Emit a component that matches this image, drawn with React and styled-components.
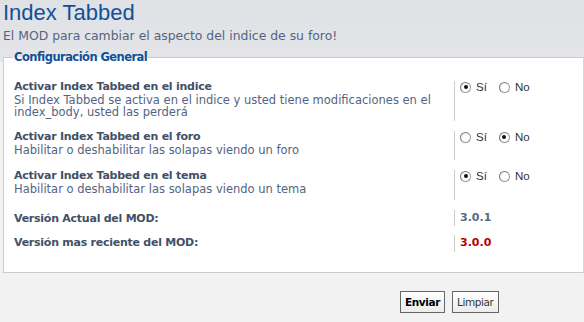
import styled, { createGlobalStyle } from "styled-components";

const GlobalStyle = createGlobalStyle`
  html, body {
    margin: 0;
    padding: 0;
  }
  body {
    background: #f2f2f2;
    font-family: "DejaVu Sans", Verdana, sans-serif;
  }
`;

const Page = styled.div`
  width: 584px;
  height: 322px;
  overflow: hidden;
  background: linear-gradient(to bottom, #dfe1e5 0, #e3e5e9 62px, #f2f2f2 62px);
`;

const Header = styled.div`
  padding: 0 3px;
`;

const Title = styled.h1`
  margin: 0;
  padding-top: 1px;
  font-family: "Liberation Sans", Arial, sans-serif;
  font-weight: normal;
  font-size: 22px;
  line-height: 24px;
  color: #115098;
`;

const Subtitle = styled.p`
  margin: 3px 0 0;
  font-size: 12.4px;
  line-height: 15px;
  color: #536482;
`;

const Fieldset = styled.fieldset`
  margin: 7px 0 0 3px;
  padding: 17px 0 8px 10px;
  width: 581px;
  box-sizing: border-box;
  border: 1px solid #cccccc;
  border-right-color: #d8d8d8;
  background: #ffffff;
  min-inline-size: 0;
`;

const Legend = styled.legend`
  padding: 0 1px;
  margin-left: -1px;
  font-weight: bold;
  font-size: 11.5px;
  line-height: 14px;
  color: #115098;
  font-family: "DejaVu Sans", Tahoma, sans-serif;
  letter-spacing: -0.55px;
`;

const Row = styled.div`
  display: grid;
  grid-template-columns: 440px 1fr;
  margin-bottom: ${p => p.$gap}px;
`;

const Label = styled.div`
  padding-top: ${p => p.$offset || 0}px;
  font-size: 11.5px;
  line-height: 12.5px;
  color: #536482;
`;

const LabelTitle = styled.div`
  font-weight: bold;
  font-size: 11px;
  color: #425067;
  letter-spacing: -0.25px;
`;

const Control = styled.div`
  border-left: 1px solid #cccccc;
  padding-left: 5px;
  display: flex;
  align-items: flex-start;
  gap: 12px;
  min-height: ${p => p.$h}px;
  box-sizing: border-box;
`;

const Option = styled.label`
  display: flex;
  align-items: center;
  gap: 5px;
  font-family: "Liberation Sans", Arial, sans-serif;
  font-size: 11.5px;
  line-height: 12px;
  color: #333333;
`;

const Radio = styled.span`
  width: 11px;
  height: 11px;
  border-radius: 50%;
  box-sizing: border-box;
  border: 1px solid #9a9a9a;
  border-top-color: #7a7a7a;
  border-left-color: #7a7a7a;
  background: radial-gradient(circle at 60% 60%, #ffffff 40%, #e6e6e6 100%);
  display: flex;
  align-items: center;
  justify-content: center;

  &::after {
    content: "";
    width: 4px;
    height: 4px;
    border-radius: 50%;
    background: ${p => (p.$checked ? "#111111" : "transparent")};
  }
`;

const Value = styled.div`
  font-weight: bold;
  font-size: 11px;
  line-height: 13px;
  padding-top: 1px;
  color: ${p => (p.$alert ? "#bc0000" : "#5a6a85")};
`;

const Buttons = styled.div`
  display: flex;
  gap: 7px;
  padding: 18px 0 0 400px;
`;

const Button = styled.button`
  height: 22px;
  padding: 0 4px;
  border: 1px solid #666666;
  background: linear-gradient(to bottom, #ffffff, #ececec);
  font-family: "DejaVu Sans", Verdana, sans-serif;
  font-size: 10.5px;
  font-weight: ${p => (p.$primary ? "bold" : "normal")};
  color: ${p => (p.$primary ? "#000000" : "#333333")};
  letter-spacing: -0.4px;
  cursor: pointer;
`;

const Toggle = ({ value, h }) => (
  <Control $h={h}>
    <Option>
      <Radio $checked={value} />
      Sí
    </Option>
    <Option>
      <Radio $checked={!value} />
      No
    </Option>
  </Control>
);

export default function App() {
  return (
    <Page>
      <GlobalStyle />
      <Header>
        <Title>Index Tabbed</Title>
        <Subtitle>El MOD para cambiar el aspecto del indice de su foro!</Subtitle>
      </Header>
      <Fieldset>
        <Legend>Configuración General</Legend>
        <Row $gap={10}>
          <Label>
            <LabelTitle>Activar Index Tabbed en el indice</LabelTitle>
            Si Index Tabbed se activa en el indice y usted tiene modificaciones en el
            index_body, usted las perderá
          </Label>
          <Toggle value h={40} />
        </Row>
        <Row $gap={10}>
          <Label>
            <LabelTitle>Activar Index Tabbed en el foro</LabelTitle>
            Habilitar o deshabilitar las solapas viendo un foro
          </Label>
          <Toggle value={false} h={29} />
        </Row>
        <Row $gap={10}>
          <Label>
            <LabelTitle>Activar Index Tabbed en el tema</LabelTitle>
            Habilitar o deshabilitar las solapas viendo un tema
          </Label>
          <Toggle value h={30} />
        </Row>
        <Row $gap={9}>
          <Label $offset={3}>
            <LabelTitle>Versión Actual del MOD:</LabelTitle>
          </Label>
          <Control $h={16}>
            <Value>3.0.1</Value>
          </Control>
        </Row>
        <Row $gap={12}>
          <Label $offset={2}>
            <LabelTitle>Versión mas reciente del MOD:</LabelTitle>
          </Label>
          <Control $h={17}>
            <Value $alert>3.0.0</Value>
          </Control>
        </Row>
      </Fieldset>
      <Buttons>
        <Button $primary>Enviar</Button>
        <Button>Limpiar</Button>
      </Buttons>
    </Page>
  );
}
